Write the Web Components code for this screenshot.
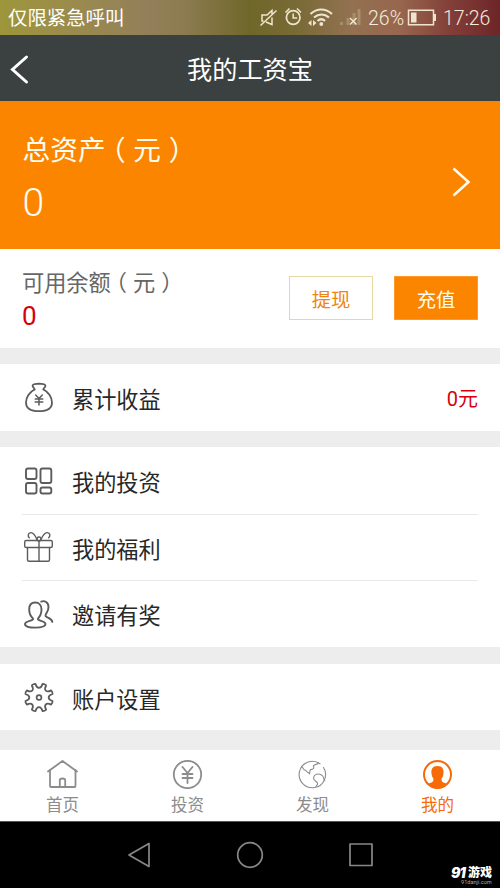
<!DOCTYPE html>
<html lang="zh-CN">
<head>
<meta charset="utf-8">
<title>我的工资宝</title>
<style>
body{margin:0;background:#ededed;font-family:Roboto,"Noto Sans CJK SC",sans-serif}
</style>
</head>
<body>
<wallet-app></wallet-app>
<script>
const define=(name,html)=>customElements.define(name,class extends HTMLElement{
  constructor(){super();this.attachShadow({mode:'open'}).innerHTML=html(this);}
});

// Eight-toothed cog outline with rounded valleys between the teeth.
const cog=(cx,cy)=>{
  const p=(r,deg)=>{const a=deg*Math.PI/180;return (cx+r*Math.cos(a)).toFixed(2)+' '+(cy+r*Math.sin(a)).toFixed(2);};
  let d='M'+p(14,22.5-8);
  for(let k=0;k<8;k++){
    const a=22.5+k*45;
    d+=`Q${p(14.8,a)} ${p(14,a+8)}C${p(8.6,a+9)} ${p(8.6,a+36)} ${p(14,a+37)}`;
  }
  return d+'Z';
};

const icons={
bag:'<g stroke-width="1.800"><path d="M12.500 9.500C7.500 12 4 17.500 4 22.500c0 6 5 8.700 13 8.700s13-2.700 13-8.700c0-5-3.500-10.500-8.500-13"/><path d="M12.500 9.500c.3-2-2.200-1.800-1.900-3.800.4-2.400 3-1.700 6.400-2 3.400.3 6-.4 6.400 2 .3 2-2.200 1.800-1.900 3.800"/><path d="M13.700 15l3.300 3.500 3.300-3.500M17 18.500V25M13.200 19h7.600M13.200 22h7.600" stroke-width="1.500"/></g>',
grid:'<g stroke-width="1.900"><rect x="4" y="4.500" width="10.500" height="10.500" rx="2"/><rect x="18.500" y="4.500" width="10.800" height="14.500" rx="2"/><rect x="4" y="19" width="10.500" height="10.500" rx="2"/><rect x="18.500" y="23.500" width="10.800" height="6" rx="2"/></g>',
gift:'<g stroke-width="1.400"><rect x="2.700" y="10.500" width="27.600" height="7" rx="1.500"/><path d="M5.500 17.500v12.300q0 1.500 1.500 1.500h19q1.500 0 1.500-1.500V17.500M17 11v20.300"/><circle cx="17" cy="9" r="2"/><path d="M15 9.500C13 5 11 2.300 8.700 2.600 6 3 5.500 6.300 7.300 7.800M19 9.500c2-4.500 4-7.200 6.300-6.900 3 .4 3.200 3.500 1.400 5.200"/></g>',
users:'<g stroke-width="1.900"><path d="M11 21.500c-3-2.500-3.800-5.200-3.800-9.200C7.200 8 9.500 5.500 13.200 5.500s6.300 2.500 6.300 6.800c0 4-.8 6.700-3.500 9.200-1 2.500 7.500 2.200 7.500 5.600 0 2.500-4 3.500-10.200 3.500S3 29.600 3 27.100C3 23.700 12 24 11 21.500z"/><path d="M19.200 4.600C22.500 3.100 26.500 5.400 26.500 9.900c0 4.500-2.500 6-3 8.500-.4 2.500 6.300 1.800 6.800 6.500"/></g>',
gear:`<path stroke-width="1.800" d="${cog(17,17.500)}"/><circle cx="17" cy="17.500" r="2.400" stroke-width="1.700"/>`,
home:'<g stroke-width="1.800"><path d="M2.500 12.500 17 2 31.500 12.500"/><path d="M4.500 11v16q0 1 1 1H29q1 0 1-1V11M14.300 28v-6.800q0-1.700 2.700-1.700t2.700 1.700V28"/></g>',
invest:'<circle cx="17" cy="15.500" r="13.700" stroke-width="1.800"/><path stroke-width="1.800" d="m12 8 5 6 5-6M17 14V24M12 15h10M12 19h10"/>',
globe:'<g stroke-width="1.100"><path d="M24.500 4.800A13.200 13.200 0 1 0 28 8.500"/><path d="M6.300 7.700c1.800 1.200 1 3.300 4 3.700.8 2.400 3 1.400 3.600 3.500.8-1.300-.1-2.800 1.100-4.300 3.100-.2 4-1.500 2.800-3.500 1.700-2.500 4.500-1 5.200-3.600M20.500 27.500c2.500-2.800 2-3.800-.8-5.700-2.300-1.500-2.300-5.300 1.200-6.500 3.500-.9 6.600 1.100 7.200 3.400.3 2 .4 2.800 1.300 3"/></g>',
mine:'<circle cx="17" cy="15.500" r="13.500" stroke-width="2"/><path fill="currentColor" stroke="none" d="M17 7c-5 0-6.700 3.300-5.900 8 .2 2.400 1 3.500 1.800 4.500.3 3.700-1.300 3.800-5.400 5.300C10 28 13 29.500 17 29.500s7-1.500 9.500-4.700c-4.100-1.500-5.700-1.600-5.400-5.300.8-1 1.600-2.100 1.800-4.500.8-4.700-.9-8-5.900-8z"/>'
};
define('line-icon',e=>`<style>:host{display:block;width:34px;height:34px}svg{display:block;fill:none;stroke:currentColor;stroke-linejoin:round;stroke-linecap:round}</style><svg width="34" height="34" viewBox="0 0 34 34">${icons[e.getAttribute('name')]}</svg>`);

define('status-bar',()=>`<style>
:host{display:flex;height:35px;align-items:center;box-sizing:border-box;padding:0 8px;color:#f4ecdc;background:linear-gradient(90deg,#9d963b 0,#9b8c4b 13%,#93805a 29%,#8c7b50 37%,#6f672a 50%,#786a35 59%,#927151 70%,#98664f 80%,#823f38 90%,#6d2528 100%)}
.net{font-size:19.400px;line-height:35px;padding-top:2px;flex:1;color:#fff}
svg{display:block;fill:none;stroke:#eee5ce;stroke-width:1.500}
.n{font-size:19.500px;line-height:37px;font-weight:300;padding-top:1px;white-space:nowrap}
</style><span class="net">仅限紧急呼叫</span>
<svg width="108" height="35" viewBox="0 0 108 35"><path d="M8.500 21h-1.500l0-6h5l5-4.500v4M11 22l6 2.500v-7M5.500 25.500l16-15"/><circle cx="38.200" cy="17.500" r="6.800" stroke-width="1.700"/><path d="M38.200 13.500v4.500h4M30.500 12.500l4-4M42 8.500l4 4"/><g stroke-width="2.200"><path d="M55.500 14c6.500-6 15-6 21.500 0M59 17.500c4.500-4 10.500-4 15 0M62.500 21c2.500-2.300 5-2.300 7.500 0"/></g><circle cx="66.300" cy="24" r="1.900" fill="#eee5ce" stroke="none"/><path fill="#eee5ce" stroke="none" d="M53 23l3.500-3v6zM61.500 23l-3.500-3v6z"/><g fill="#b19b76" stroke="none" opacity=".7"><path d="M85 22h3v3h-3zM91.500 18h3v7h-3zM97.500 13h3v12h-3zM102.500 9h3v16h-3z"/></g><path stroke-width="1.500" d="m95 18 6.500 6.500m0-6.500-6.500 6.500"/></svg>
<span class="n" style="margin-left:5px;width:38px">26%</span>
<svg width="30" height="35" viewBox="0 0 30 35"><path stroke-width="1.500" d="M2.500 10.200h25v14.600h-25z"/><path stroke-width="2" d="M29 14v7"/><path fill="#eee5ce" stroke="none" d="M5 12.500h5.500v10H5z"/></svg>
<span class="n" style="margin-left:7px;width:49px">17:26</span>`);

define('title-bar',()=>`<style>:host{display:grid;grid-template-columns:50px 1fr 50px;height:66px;align-items:center;background:#3b4040;color:#fff}span{text-align:center;font-size:25.200px;line-height:36px;padding-top:5px}svg{display:block;fill:none;stroke:#fff;stroke-width:3;stroke-linecap:round}</style>
<svg width="50" height="66" viewBox="0 0 50 66"><path d="M26.500 22 12.500 34.500l14 12.500"/></svg><span><slot></slot></span>`);

// Full-width brackets sit mid-cell: half-width glyphs padded out to one em.
const yuan='<span style="font-feature-settings:\'halt\';margin:0 .27em 0 .23em">（</span>元<span style="font-feature-settings:\'halt\';margin-left:.28em">）</span>';

define('total-panel',()=>`<style>:host{display:flex;height:147.500px;box-sizing:border-box;background:#fc8500;color:#fffdf2;padding:30px 29px 0 22.500px;justify-content:space-between}.l{font-size:27.700px;line-height:40px}.v{font-size:39px;line-height:46px;font-weight:350;padding-top:9px}svg{display:block;fill:none;stroke:#fffdf2;stroke-width:2.500;margin-top:35px}</style>
<div><div class="l">总资产${yuan}</div><div class="v">0</div></div><svg width="20" height="32" viewBox="0 0 20 32"><path d="M2.500 2.500 17.500 16l-15 13.500"/></svg>`);

define('action-button',()=>`<style>:host{display:block;box-sizing:border-box;width:84px;height:44px;border:1px solid #e6d8a4;color:#ed8512;font-size:19.300px;line-height:47px;text-align:center}:host([primary]){background:#fc8500;border-color:#fc9a2c;color:#fffdf2}</style><slot></slot>`);

define('balance-panel',()=>`<style>:host{display:flex;height:99.500px;box-sizing:border-box;background:#fff;padding:18px 22px 0;justify-content:space-between}.l{font-size:22.200px;line-height:32px;color:#666}.v{font-size:26px;line-height:32px;padding-top:1px;color:#d8000f}.b{display:flex;gap:21px;padding-top:9.500px}</style>
<div><div class="l">可用余额${yuan}</div><div class="v">0</div></div><div class="b"><action-button>提现</action-button><action-button primary>充值</action-button></div>`);

define('menu-row',e=>`<style>:host{display:flex;height:66.600px;align-items:center;box-sizing:border-box;padding:0 22px;color:#282828}line-icon{color:#5c5c5c;margin-right:16px}.t{flex:1;font-size:22.200px;line-height:34px;padding-top:5px}::slotted(b){color:#d8000f;font-size:20px;line-height:34px;font-weight:400;padding-top:4px}</style>
<line-icon name="${e.getAttribute('icon')}"></line-icon><span class="t">${e.getAttribute('label')}</span><slot></slot>`);

define('menu-group',()=>`<style>:host{display:block;background:#fff;margin-top:16.700px}::slotted(menu-row:not(:first-child)){background:linear-gradient(#e9e9e9,#e9e9e9) 22px 0/456px 1px no-repeat}</style><slot></slot>`);

define('tab-item',()=>`<style>:host{display:flex;flex:1;flex-direction:column;align-items:center;color:#8c8c8c;font-size:16.500px;line-height:24px;padding-top:8.500px}::slotted(line-icon){height:35px;transform:translateX(-.5px)}:host([active]){color:#f66a08}</style><slot name="icon"></slot><slot></slot>`);

define('tab-bar',()=>`<style>:host{display:flex;height:70.500px;background:#fff;margin-top:20px}</style>
<tab-item><line-icon slot="icon" name="home"></line-icon>首页</tab-item><tab-item><line-icon slot="icon" name="invest"></line-icon>投资</tab-item><tab-item><line-icon slot="icon" name="globe"></line-icon>发现</tab-item><tab-item active><line-icon slot="icon" name="mine"></line-icon>我的</tab-item>`);

define('site-mark',()=>`<style>:host{display:block;width:42px;color:#fff;white-space:nowrap}.a{display:flex;align-items:center;height:12px;font-weight:900;font-size:12px;line-height:12px}i{font-family:Inter,sans-serif;font-size:14px;width:17px;letter-spacing:-1px;flex:none}.b{font-size:5.600px;line-height:7px;color:#aaa;padding-left:10px}</style><div class="a"><i>91</i>游戏</div><div class="b">91danji.com</div>`);

define('system-nav',()=>`<style>:host{display:flex;position:relative;height:67px;box-sizing:border-box;background:#000;border-top:1px solid #555;justify-content:center}svg{display:block;fill:none;stroke:#888;stroke-width:1.700;stroke-linejoin:round}site-mark{position:absolute;right:7px;bottom:2px}</style>
<svg width="250" height="66" viewBox="0 0 250 66"><path d="M4 33 24 21.500v23zM225 22h22v21.500h-22z"/><circle cx="125" cy="33" r="12.300"/></svg><site-mark></site-mark>`);

define('wallet-app',()=>`<style>:host{display:flex;flex-direction:column;width:500px;height:888px;overflow:hidden;background:#ededed}:host>*{flex-shrink:0}</style>
<status-bar></status-bar><title-bar>我的工资宝</title-bar><total-panel></total-panel><balance-panel></balance-panel>
<menu-group style="margin-top:16px"><menu-row icon="bag" label="累计收益"><b>0元</b></menu-row></menu-group>
<menu-group><menu-row icon="grid" label="我的投资"></menu-row><menu-row icon="gift" label="我的福利"></menu-row><menu-row icon="users" label="邀请有奖"></menu-row></menu-group>
<menu-group><menu-row icon="gear" label="账户设置"></menu-row></menu-group>
<tab-bar></tab-bar><system-nav></system-nav>`);
</script>
</body>
</html>
